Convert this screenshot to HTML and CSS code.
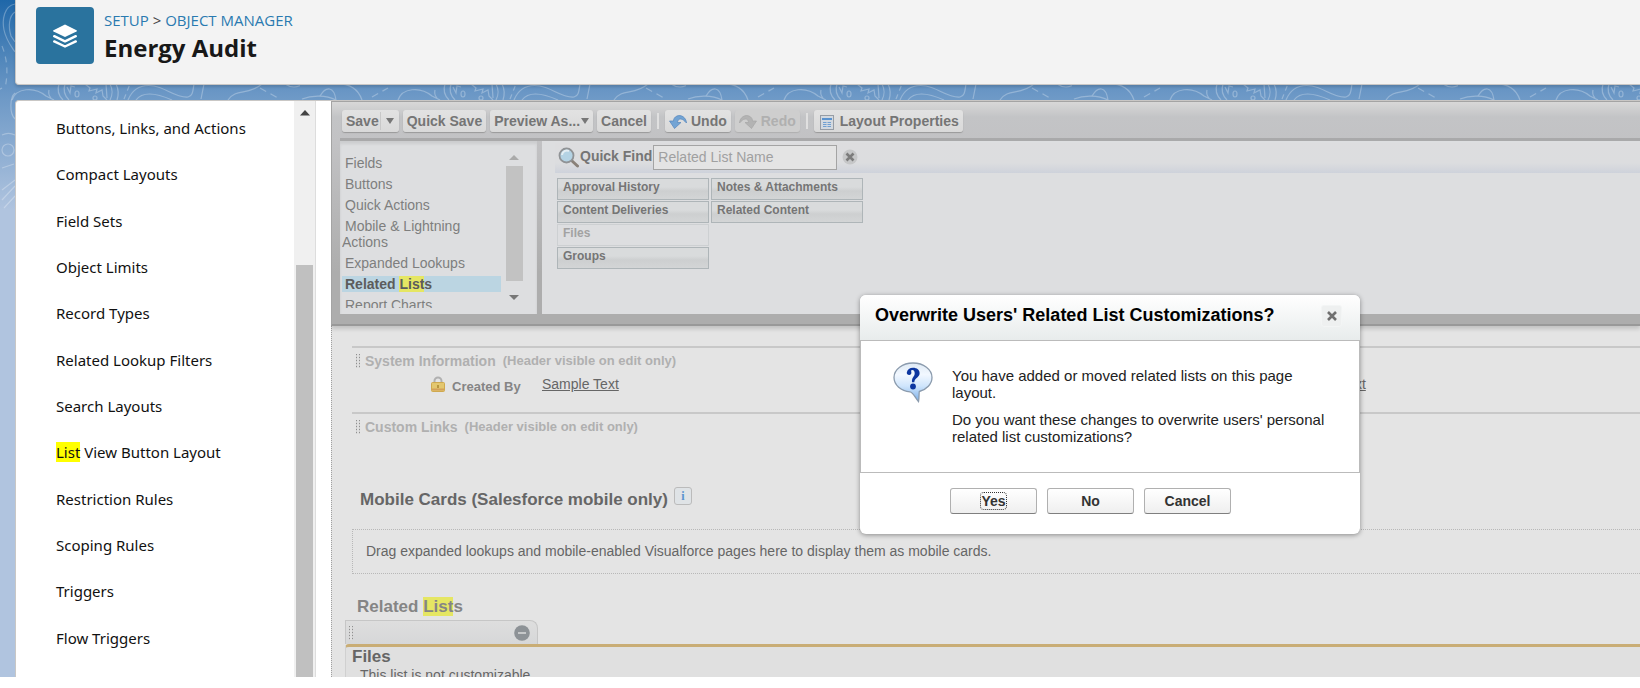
FILE: index.html
```html
<!DOCTYPE html>
<html lang="en">
<head>
<meta charset="utf-8">
<title>Energy Audit | Object Manager</title>
<link rel="stylesheet" href="styles.css">
</head>
<body>
<div class="app">
  <svg class="contours" width="100%" height="230" aria-hidden="true">
    <defs>
      <pattern id="topo" x="-86" width="386" height="230" patternUnits="userSpaceOnUse">
        <g fill="none" stroke="#fff" stroke-opacity=".28" stroke-width="1.2">
          <path d="M2 99c10-4 24-4 34 1M20 96c6-10 14-10 16 4M30 84c18-2 28 4 32 16"/>
          <path d="M72 97l16-9" stroke-dasharray="7 5"/>
          <path d="M98 100c4-12 22-14 34-4l8 4M135 90c-1 4 0 6 2 8"/>
          <path d="M145 84c-2 6 0 12 4 16M151 84c-2 6 0 12 4 16"/>
          <ellipse cx="163" cy="94" rx="2" ry="3"/><circle cx="181" cy="98" r="2"/>
          <path d="M153 87l3 6 1-7 4 1M171 84l5 4-1 3 8-2-1 4 6-3 1 6 4 4M192 84l1 14M196 84c3 6 3 10 0 16M202 84c3 6 3 10 1 16"/>
          <path d="M210 99l6-15" stroke-dasharray="5 4"/>
          <path d="M214 100C219 88 228 84 240 86s22 12 34 11c5-1 5-7 6-13M222 100c6-8 18-8 36 0M287 99l3-15"/>
          <path d="M314 100c8-12 20-4 34-16M371 84c6 4 12 4 18 0"/>
          <path d="M346 88l18 10" stroke-dasharray="7 5"/>
        </g>
      </pattern>
    </defs>
    <rect width="100%" height="230" fill="url(#topo)"/>
    <g fill="none" stroke="#fff" stroke-opacity=".28" stroke-width="1.2">
      <path d="M15 4C4 6 2 20 4 30s7 16 11 22M15 12c-6 4-7 14-4 24l4 6M15 93c-5 4-6 20 0 26"/>
      <path d="M2 46q8 20 3 42" stroke-dasharray="6 5"/>
      <path d="M2 135c4-2 9-2 13 0"/><circle cx="8" cy="150" r="6"/>
      <path d="M2 168l12-4M2 190l13-10M2 200l13-14M4 208l11-12"/>
    </g>
  </svg>

  <header class="page-header">
    <div class="object-icon">
      <svg width="26" height="26" viewBox="0 0 26 26" aria-hidden="true">
        <path fill="#fff" d="M13 1.500 24.500 7.200c.6.400.6 1 0 1.400L13 14 1.500 8.600c-.6-.4-.6-1 0-1.400z"/>
        <path fill="none" stroke="#fff" stroke-width="2.400" stroke-linecap="round" stroke-linejoin="round" d="M2.200 13.200 13 18.300l10.800-5.100M2.200 18.400 13 23.500l10.800-5.100"/>
      </svg>
    </div>
    <div>
      <nav class="crumbs"><a href="#">SETUP</a> <span>&gt;</span> <a href="#">OBJECT MANAGER</a></nav>
      <h1>Energy Audit</h1>
    </div>
  </header>

  <div class="columns">
    <aside class="side">
      <nav class="side-nav">
        <a href="#">Buttons, Links, and Actions</a>
        <a href="#">Compact Layouts</a>
        <a href="#">Field Sets</a>
        <a href="#">Object Limits</a>
        <a href="#">Record Types</a>
        <a href="#">Related Lookup Filters</a>
        <a href="#">Search Layouts</a>
        <a href="#"><mark>List</mark> View Button Layout</a>
        <a href="#">Restriction Rules</a>
        <a href="#">Scoping Rules</a>
        <a href="#">Triggers</a>
        <a href="#">Flow Triggers</a>
      </nav>
      <div class="side-scroll">
        <svg width="10" height="6" viewBox="0 0 10 6" aria-hidden="true"><path d="M5 0l5 5.500H0z" fill="#444"/></svg>
        <div class="side-thumb"></div>
      </div>
    </aside>

    <main class="editor">
      <section class="palette">
        <div class="toolbar">
          <button class="tool save">Save<i class="split"></i><i class="caret"></i></button>
          <button class="tool">Quick Save</button>
          <button class="tool preview">Preview As...<i class="caret"></i></button>
          <button class="tool">Cancel</button>
          <span class="sep"></span>
          <button class="tool">
            <svg width="18" height="15" viewBox="0 0 18 15" aria-hidden="true"><path d="M17.500 9C17 3 12 .5 8 2 5.500 3 4.500 5 4.500 7H.5l5 7.500L12 8.500H8.500c0-2 1-3.500 3-3.500 2.500 0 4 2 6 4z" fill="#73a4d4" stroke="#5585bb" stroke-width=".7"/></svg>
            Undo</button>
          <button class="tool off" disabled>
            <svg width="18" height="15" viewBox="0 0 18 15" aria-hidden="true"><path d="M.5 9C1 3 6 .5 10 2c2.500 1 3.500 3 3.500 5h4l-5 7.500L6 8.500h3.500c0-2-1-3.500-3-3.500-2.500 0-4 2-6 4z" fill="#b3b3b3" stroke="#a6a6a6" stroke-width=".7"/></svg>
            Redo</button>
          <span class="sep"></span>
          <button class="tool props">
            <svg width="14" height="15" viewBox="0 0 14 15" aria-hidden="true"><rect x=".5" y=".5" width="13" height="14" fill="#d3d9e0" stroke="#979da5"/><path d="M2 3h10v2H2z" fill="#5b93cf"/><path d="M3 7.500h3.500M3 9.500h3.500M3 11.500h3.500M7.500 7.500H11M7.500 9.500H11M7.500 11.500H11" stroke="#6f9fd2" stroke-width="1.200"/></svg>
            Layout Properties</button>
        </div>
        <div class="palette-body">
          <div class="types">
            <div class="type-list">
              <a href="#">Fields</a>
              <a href="#">Buttons</a>
              <a href="#">Quick Actions</a>
              <a href="#">Mobile &amp; Lightning Actions</a>
              <a href="#">Expanded Lookups</a>
              <a href="#" class="on">Related <mark>List</mark>s</a>
              <a href="#">Report Charts</a>
            </div>
            <div class="type-scroll">
              <svg width="10" height="5" viewBox="0 0 10 5" aria-hidden="true"><path d="M5 0l5 5H0z" fill="#aaa"/></svg>
              <div class="type-thumb"></div>
              <svg width="10" height="5" viewBox="0 0 10 5" aria-hidden="true"><path d="M5 5l5-5H0z" fill="#777"/></svg>
            </div>
          </div>
          <div class="items">
            <div class="find">
              <svg width="21" height="21" viewBox="0 0 21 21" aria-hidden="true"><path d="M13 13l6.500 6" stroke="#8a8178" stroke-width="3" stroke-linecap="round"/><circle cx="8.500" cy="8.500" r="7" fill="#b4d3e4" stroke="#909396" stroke-width="1.800"/><path d="M4 8a5 5 0 0 1 7-4" stroke="#e4eef3" stroke-width="2" fill="none"/></svg>
              <label for="find">Quick Find</label>
              <input id="find" type="text" placeholder="Related List Name">
              <button class="clear" aria-label="Clear"><svg width="16" height="16" viewBox="0 0 16 16"><circle cx="8" cy="8" r="7.500" fill="#c6c7c8"/><path d="M4.500 4.500l7 7M11.500 4.500l-7 7" stroke="#7c7c7c" stroke-width="2.600"/></svg></button>
            </div>
            <div class="grid">
              <button>Approval History</button><button>Notes &amp; Attachments</button>
              <button>Content Deliveries</button><button>Related Content</button>
              <button class="used" disabled>Files</button>
              <button class="last">Groups</button>
            </div>
          </div>
        </div>
      </section>

      <section class="layout">
        <div class="block system">
          <h3><i class="grip"></i>System Information <small>(Header visible on edit only)</small></h3>
          <div class="fields">
            <div class="field">
              <svg width="14" height="16" viewBox="0 0 14 16" aria-hidden="true"><path d="M3.500 7V5a3.500 3.500 0 0 1 7 0v2" fill="none" stroke="#b0b0b0" stroke-width="2"/><rect x=".5" y="6.500" width="13" height="9" rx="1" fill="#e3c76f" stroke="#cfa94f"/><path d="M1 13.500h12" stroke="#d3a05a" stroke-width="2"/><path d="M7 9v3" stroke="#a8842f" stroke-width="1.500"/></svg>
              <span class="name">Created By</span><a href="#">Sample Text</a>
            </div>
            <div class="field second"><a href="#">Sample Text</a></div>
          </div>
        </div>
        <div class="block links">
          <h3><i class="grip"></i>Custom Links <small>(Header visible on edit only)</small></h3>
        </div>
        <h2 class="mobile">Mobile Cards (Salesforce mobile only) <button class="info" aria-label="Info">i</button></h2>
        <p class="drop">Drag expanded lookups and mobile-enabled Visualforce pages here to display them as mobile cards.</p>
        <h2 class="related">Related <mark>List</mark>s</h2>
        <div class="tab"><i class="grip"></i>
          <button class="remove" aria-label="Remove"><svg width="16" height="16" viewBox="0 0 16 16"><circle cx="8" cy="8" r="7.800" fill="#8d9296"/><path d="M4 8h8" stroke="#dadada" stroke-width="1.500"/></svg></button>
        </div>
        <div class="list-card">
          <h2>Files</h2>
          <p>This list is not customizable</p>
        </div>
      </section>
    </main>
  </div>
</div>

<div class="dialog" role="dialog" aria-labelledby="dlg-title">
  <div class="dialog-head">
    <h2 id="dlg-title">Overwrite Users' Related List Customizations?</h2>
    <button class="close" aria-label="Close"><svg width="10" height="10" viewBox="0 0 10 10"><path d="M1 1l8 8M9 1L1 9" stroke="#707070" stroke-width="2.600"/></svg></button>
  </div>
  <div class="dialog-body">
    <svg width="40" height="41" viewBox="0 0 40 41" aria-hidden="true">
      <defs><linearGradient id="bub" x2="0" y2="1"><stop offset="0" stop-color="#dfeaf5"/><stop offset=".3" stop-color="#f2f8ff"/><stop offset=".6" stop-color="#cfe5fc"/><stop offset="1" stop-color="#79aee8"/></linearGradient></defs>
      <path d="M20 1C9.500 1 1 7.500 1 15.500c0 7.500 7 13.500 16 14.300 3 .3 4.500 5 8.500 9.700.8-3.500.3-7 .8-10C33.500 27.500 39 22 39 15.500 39 7.500 30.500 1 20 1z" fill="url(#bub)" stroke="#8b9bad" stroke-width="1.300"/>
      <path d="M13.800 10.500c.5-3 3-4.700 6.200-4.700 4 0 6.600 2.200 6.600 5.400 0 4.300-5 4.600-5.300 9h-2.300c-.5-5 2.700-5.600 2.700-9 0-2-.8-3.300-2.300-3.300-1 0-1.500.5-1.200 1.500.7 2-.4 3.600-2 3.600-1.600 0-2.600-1-2.400-2.500z" fill="#0c36a0"/><circle cx="20" cy="24.500" r="2.900" fill="#0c36a0"/>
    </svg>
    <div class="message">
      <p>You have added or moved related lists on this page layout.</p>
      <p>Do you want these changes to overwrite users' personal related list customizations?</p>
    </div>
  </div>
  <div class="dialog-foot">
    <button><span class="focus">Yes</span></button>
    <button>No</button>
    <button>Cancel</button>
  </div>
</div>
</body>
</html>
```
FILE: styles.css
```css
* { box-sizing: border-box; }
html, body { height: 100%; margin: 0; }
body {
  display: flex;
  flex-direction: column;
  padding-bottom: 11px;
  background: #fff;
  font: 14px/16px "Liberation Sans", Arial, sans-serif;
  overflow: hidden;
}
h1, h2, h3, p { margin: 0; }
button { font: inherit; color: inherit; margin: 0; padding: 0; border: 0; background: none; }
a { color: inherit; text-decoration: none; }
mark { color: inherit; background: #ff0; }

.app {
  position: relative;
  flex: 1;
  min-height: 0;
  display: flex;
  flex-direction: column;
  gap: 15px;
  padding-left: 15px;
  overflow: hidden;
  background: linear-gradient(#1f67a9 0, #4a82b8 50px, #6c98c6 95px, #b0c4df 210px);
}
.contours { position: absolute; left: 0; top: 0; }

.page-header {
  position: relative;
  display: flex;
  gap: 10px;
  height: 85px;
  padding: 7px 20px;
  background: #f3f3f3;
  border: 1px solid #c9c7c5;
  border-width: 0 0 1px 1px;
  border-radius: 0 0 0 4px;
  box-shadow: 0 2px 3px rgba(0, 0, 0, .15);
}
.object-icon {
  display: grid;
  place-items: center;
  width: 58px;
  height: 57px;
  border-radius: 4px;
  background: #2a739e;
}
.crumbs { font: 15px/26px "Open Sans", "Noto Sans", sans-serif; color: #444; }
.crumbs a { color: #2a7ab0; }
h1 { font: bold 24px/30px "Open Sans", "Noto Sans", sans-serif; color: #181818; }

.columns {
  position: relative;
  flex: 1;
  min-height: 0;
  display: flex;
  gap: 15px;
  background: #fff;
  border: 1px solid #c9c7c5;
  border-width: 1px 0 0 1px;
  border-radius: 4px 0 0 0;
}
.side { display: flex; width: 300px; border-right: 1px solid #ddd; }
.side-nav {
  flex: 1;
  display: flex;
  flex-direction: column;
  padding: 4px 0 16px 40px;
  font: 15px/20px "Noto Sans", "Open Sans", sans-serif;
  color: #111;
}
.side-nav a { flex: 1; display: flex; align-items: center; white-space: pre; }
.side-scroll {
  display: flex;
  flex-direction: column;
  align-items: center;
  gap: 149px;
  width: 21px;
  padding-top: 9px;
  background: #f0f0f0;
}
.side-thumb { flex: 1; width: 17px; background: #c0c0c0; }

.editor {
  flex: 1;
  min-width: 0;
  display: flex;
  flex-direction: column;
  overflow: hidden;
}
.palette {
  position: relative;
  height: 225px;
  padding-left: 8px;
  display: flex;
  flex-direction: column;
  background: linear-gradient(#d8d8d8, #c3c4c6 15px, #c2c2c4 40px, #adadad 170px);
  border: 1px solid #a4a4a4;
  border-width: 1px 0 2px 1px;
  border-bottom-color: #999;
  box-shadow: 0 3px 4px rgba(0, 0, 0, .15);
  color: #757575;
}
.toolbar { display: flex; align-items: center; gap: 4px; height: 39px; padding: 2px 2px 0; border-bottom: 3px solid #a9a9aa; }
.tool {
  display: flex;
  align-items: center;
  gap: 4px;
  height: 22px;
  padding: 0 4px;
  border-radius: 3px;
  background: linear-gradient(#e2e2e2, #d9d9d9);
  box-shadow: 0 1px 1px #999;
  font-weight: bold;
  white-space: nowrap;
}
.save { gap: 5px; }
.save .split { margin-left: -4px; }
.preview { gap: 1px; }
.props { gap: 6px; padding: 0 4px 0 6px; }
.props svg { margin-top: 3px; }
.off { color: #b0b0b0; background: #cecece; box-shadow: 0 1px 1px #b0b0b0; }
.split { width: 1px; height: 18px; background: #c8c8c8; }
.caret { margin-right: 1px; border: 4px solid transparent; border-top: 6px solid #777; border-bottom: 0; }
.preview .caret { margin-right: 0; }
.sep { width: 2px; height: 16px; margin: 0 2px; background: #e0e0e0; }

.palette-body { flex: 1; min-height: 0; display: flex; gap: 5px; padding-bottom: 10px; }
.types { display: flex; gap: 4px; width: 197px; padding: 14px 14px 6px 2px; background: #dddee0; box-shadow: inset 0 3px 3px rgba(0, 0, 0, .08); }
.type-list { width: 159px; display: flex; flex-direction: column; gap: 5px; overflow: hidden; color: #7e7e7e; }
.type-list a { flex: none; text-indent: 3px; }
.type-list .on { background: #bbd5e2; font-weight: bold; color: #5c5c5c; }
.type-list mark, .related mark { background: #e5e663; }
.type-scroll { display: flex; flex-direction: column; align-items: center; gap: 6px; width: 18px; padding-bottom: 8px; }
.type-thumb { width: 17px; flex: 1; margin-bottom: 8px; background: #c2c2c2; }
.type-scroll svg { flex: none; }
.items { flex: 1; padding: 2px 0 0 13px; background: #dddee0; }
.find {
  display: flex;
  align-items: center;
  height: 30px;
  padding: 0 3px 2px;
  background: linear-gradient(#dddddf, #dcdddf 20px, #ced2db);
}
.find label { padding: 0 1px 3px; font-weight: bold; }
.find input {
  width: 184px;
  height: 25px;
  padding: 0 4px;
  border: 1px solid #a4a4a4;
  background: #e4e4e4;
  font: inherit;
}
.find input::placeholder { color: #a0a0a0; opacity: 1; }
.clear { display: flex; margin-left: 5px; }
.grid { display: grid; grid-template-columns: 152px 152px; gap: 1px 2px; padding: 5px 2px; }
.grid button {
  height: 22px;
  padding: 0 5px 4px;
  border: 1px solid #aeb5b8;
  background: linear-gradient(#d9dbdc 40%, #cdcfd0 60%, #d3d5d6);
  font-size: 12px;
  line-height: 15px;
  font-weight: bold;
  text-align: left;
}
.grid .used { color: #a2a2a2; border-color: #cdd0d2; background: #dddee0; }
.grid .last { grid-column: 1; }

.layout { flex: 1; min-height: 0; padding: 20px 0 0 13px; border-left: 1px dotted #a0a0a0; background: #e4e4e4; color: #666; }
.block { margin-left: 7px; border-top: 2px solid #c8c8c8; }
.system { height: 66px; }
.links { height: 75px; }
.block h3 { display: flex; align-items: center; height: 25px; padding-left: 4px; font-size: 14px; color: #b0b0b0; }
.block small { margin-left: 7px; font-size: 13px; }
.grip {
  width: 4px;
  height: 14px;
  margin-right: 5px;
  background:
    linear-gradient(90deg, transparent 1px, #e0e0e0 1px 3px, transparent 3px),
    repeating-linear-gradient(#909090 0 1px, #d0d0d0 1px 3px);
}
.fields { display: grid; grid-template-columns: 58% 1fr; }
.field { display: flex; padding: 3px 0 0 79px; line-height: 17px; }
.second { padding-left: 190px; }
.name { width: 90px; margin-left: 7px; padding-top: 2px; font-size: 13px; font-weight: bold; color: #858585; }
.field a { text-decoration: underline; }
.mobile, .related, .list-card h2 { font-size: 17px; line-height: 20px; }
.mobile { display: flex; gap: 6px; padding-left: 15px; line-height: 26px; }
.info { width: 18px; height: 18px; border: 1px solid #bbb; border-radius: 3px; background: #dfe3e6; color: #5b93cf; font: bold 12px/14px "Liberation Serif", serif; }
.drop { margin: 16px 0 23px 7px; padding: 13px; border: 1px dotted #b8b8b8; border-right: 0; line-height: 17px; }
.related { padding-left: 12px; color: #858585; }
.tab { display: flex; align-items: center; justify-content: space-between; width: 193px; height: 24px; margin-top: 3px; padding: 0 7px 0 3px; border: 1px solid #c6c6c6; border-bottom: 0; border-radius: 0 8px 0 0; background: linear-gradient(#dedede, #d6d7d8); }
.remove { display: flex; }
.list-card { padding-left: 6px; border-top: 3px solid #c9ad75; border-left: 1px solid #d0d0d0; border-radius: 4px 0 0 0; background: #e0e0e0; }
.list-card p { padding-left: 8px; }

.dialog {
  position: absolute;
  left: calc(50% + 40px);
  top: 295px;
  width: 500px;
  border-radius: 6px;
  background: #fff;
  box-shadow: 0 1px 5px rgba(0, 0, 0, .4);
  color: #222;
}
.dialog-head {
  display: flex;
  justify-content: space-between;
  height: 46px;
  padding: 10px 18px 0 15px;
  border-bottom: 1px solid #bbb;
  border-radius: 6px 6px 0 0;
  background: linear-gradient(#fff, #e8ecec);
}
.dialog-head h2 { font-size: 18px; line-height: 20px; color: #000; }
.close { display: grid; place-items: center; width: 21px; height: 22px; border: 1px solid #f3f5f5; border-radius: 3px; background: #eef0f0; }
.dialog-body { display: flex; gap: 19px; padding: 21px 30px 17px 32px; border: 1px solid #bbb; border-top: 0; font-size: 15px; line-height: 17px; }
.dialog-body svg { flex: none; }
.message { padding-top: 5px; }
.message p { margin-bottom: 10px; }
.dialog-foot { display: flex; gap: 10px; padding: 15px 90px 20px; }
.dialog-foot button { width: 87px; height: 26px; border: 1px solid #b0b0b0; border-bottom-color: #7f7f7f; border-radius: 3px; background: linear-gradient(#fff, #efefef); font-weight: bold; color: #333; }
.focus { border-radius: 3px; outline: 1px dotted #333; }
```
